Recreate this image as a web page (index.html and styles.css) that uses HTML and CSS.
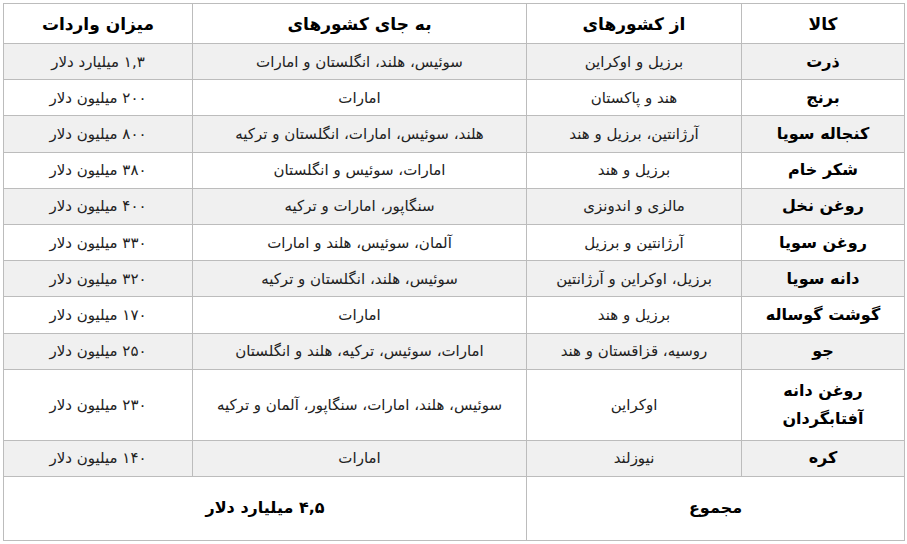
FILE: index.html
```html
<!DOCTYPE html>
<html lang="fa" dir="rtl">
<head>
<meta charset="utf-8">
<link rel="stylesheet" href="styles.css">
</head>
<body>
<div class="wrap">
<table class="imports">
<colgroup>
<col class="c-item"><col class="c-from"><col class="c-instead"><col class="c-amount">
</colgroup>
<thead>
<tr class="head"><th>کالا</th><th>از کشورهای</th><th>به جای کشورهای</th><th>میزان واردات</th></tr>
</thead>
<tbody>
<tr class="alt"><th>ذرت</th><td>برزیل و اوکراین</td><td>سوئیس، هلند، انگلستان و امارات</td><td>۱,۳ میلیارد دلار</td></tr>
<tr><th>برنج</th><td>هند و پاکستان</td><td>امارات</td><td>۲۰۰ میلیون دلار</td></tr>
<tr class="alt"><th>کنجاله سویا</th><td>آرژانتین، برزیل و هند</td><td>هلند، سوئیس، امارات، انگلستان و ترکیه</td><td>۸۰۰ میلیون دلار</td></tr>
<tr><th>شکر خام</th><td>برزیل و هند</td><td>امارات، سوئیس و انگلستان</td><td>۳۸۰ میلیون دلار</td></tr>
<tr class="alt"><th>روغن نخل</th><td>مالزی و اندونزی</td><td>سنگاپور، امارات و ترکیه</td><td>۴۰۰ میلیون دلار</td></tr>
<tr><th>روغن سویا</th><td>آرژانتین و برزیل</td><td>آلمان، سوئیس، هلند و امارات</td><td>۳۳۰ میلیون دلار</td></tr>
<tr class="alt"><th>دانه سویا</th><td>برزیل، اوکراین و آرژانتین</td><td>سوئیس، هلند، انگلستان و ترکیه</td><td>۳۲۰ میلیون دلار</td></tr>
<tr><th>گوشت گوساله</th><td>برزیل و هند</td><td>امارات</td><td>۱۷۰ میلیون دلار</td></tr>
<tr class="alt"><th>جو</th><td>روسیه، قزاقستان و هند</td><td>امارات، سوئیس، ترکیه، هلند و انگلستان</td><td>۲۵۰ میلیون دلار</td></tr>
<tr class="tall"><th>روغن دانه<br>آفتابگردان</th><td>اوکراین</td><td>سوئیس، هلند، امارات، سنگاپور، آلمان و ترکیه</td><td>۲۳۰ میلیون دلار</td></tr>
<tr class="alt"><th>کره</th><td>نیوزلند</td><td>امارات</td><td>۱۴۰ میلیون دلار</td></tr>
<tr class="total"><th colspan="2">مجموع</th><th colspan="2">۴,۵ میلیارد دلار</th></tr>
</tbody>
</table>
</div>
</body>
</html>
```

FILE: styles.css
```css
html, body {
  margin: 0;
  padding: 0;
  background: #ffffff;
}

.wrap {
  padding: 3px 2px 0 4px;
}

.imports {
  width: 901px;
  border-collapse: collapse;
  table-layout: fixed;
  font-family: "DejaVu Sans", "Noto Sans", sans-serif;
  color: #1a1a1a;
}

.c-item { width: 163px; }
.c-from { width: 215px; }
.c-instead { width: 334px; }
.c-amount { width: 189px; }

.imports th,
.imports td {
  border: 1px solid #bcbcbc;
  text-align: center;
  vertical-align: middle;
  padding: 0 4px;
}

.imports td {
  font-size: 15px;
  font-weight: normal;
  color: #222;
}

.imports tbody th {
  font-size: 16px;
  font-weight: bold;
  color: #000;
  line-height: 1.75;
}

.head th {
  height: 39px;
  font-size: 17px;
  font-weight: bold;
  color: #000;
}

.imports tbody tr {
  height: 36.2px;
}

.imports tbody tr.alt {
  background: #f0f0f0;
}

.imports tbody tr.tall {
  height: 71px;
}

.imports tbody tr.total {
  height: 64px;
}

.total th {
  font-size: 20px;
}
```
